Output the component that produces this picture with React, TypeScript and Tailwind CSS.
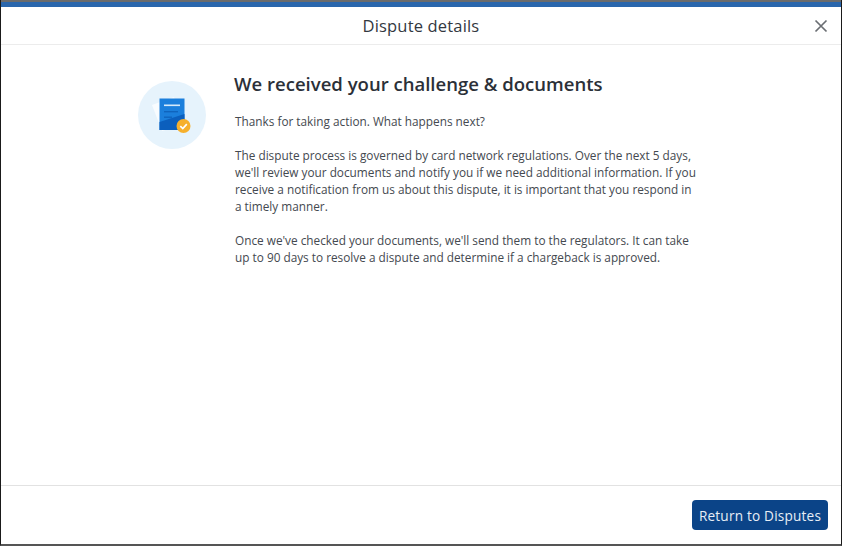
import React from "react";

function DocIcon() {
  return (
    <svg width="68" height="68" viewBox="0 0 68 68" className="block">
      <circle cx="34" cy="34" r="34" fill="#e6f3fc" />
      <path d="M14 24 L36 16 L46 44 L24 50 Z" fill="#f8fcff" />
      <rect x="21.5" y="17.5" width="25" height="31.5" fill="#1b7fdc" />
      <path d="M21.5 41 L46.5 33 L46.5 49 L21.5 49 Z" fill="#0b5fbd" />
      <rect x="26" y="23.5" width="16" height="1.6" fill="#d5eafa" />
      <rect x="26" y="30" width="14" height="1.4" fill="#0f64bd" />
      <rect x="26" y="35.5" width="8" height="1.4" fill="#0f64bd" />
      <circle cx="45.5" cy="45" r="7" fill="#f6b02c" />
      <path d="M42.3 45.1 L44.8 47.5 L48.8 43.1" fill="none" stroke="#fff" strokeWidth="1.7" />
    </svg>
  );
}

export default function App() {
  return (
    <div className="w-[842px] h-[546px] bg-white flex flex-col border-l border-r border-b-2 border-l-[#1a1a1a] border-r-[#1a1a1a] border-b-[#555555] font-['Open_Sans','Noto_Sans',sans-serif] overflow-hidden">
      <div className="h-[2px] bg-[#6b6b6b] -mx-px shrink-0" />
      <div className="h-[5px] bg-[#2a66ac] -mx-px shrink-0" />
      <header className="h-[38px] shrink-0 border-b border-[#ececec] flex items-center justify-center relative pt-[2px]">
        <h1 className="text-[16.5px] text-[#33383f] leading-none tracking-[0.17px]">Dispute details</h1>
        <svg className="absolute right-[13px] top-[12px]" width="14" height="14" viewBox="0 0 14 14">
          <path d="M1.5 1.5 L12.5 12.5 M12.5 1.5 L1.5 12.5" stroke="#6a6e73" strokeWidth="1.7" fill="none" />
        </svg>
      </header>
      <main className="flex-1 flex pl-[137px]">
        <div className="pt-[36px] shrink-0">
          <DocIcon />
        </div>
        <div className="ml-[28px] pt-[27px] w-[480px]">
          <h2 className="text-[18.55px] font-semibold text-[#2b3038] leading-[24px]">
            We received your challenge &amp; documents
          </h2>
          <div className="mt-[17px] ml-px text-[11.8px] leading-[17px] text-[#44494f] flex flex-col gap-[17px]">
            <p>Thanks for taking action. What happens next?</p>
            <p>
              The dispute process is governed by card network regulations. Over the next 5 days,
              <br />
              we'll review your documents and notify you if we need additional information. If you
              <br />
              receive a notification from us about this dispute, it is important that you respond in
              <br />a timely manner.
            </p>
            <p>
              Once we've checked your documents, we'll send them to the regulators. It can take
              <br />
              up to 90 days to resolve a dispute and determine if a chargeback is approved.
            </p>
          </div>
        </div>
      </main>
      <footer className="h-[59px] shrink-0 border-t border-[#e2e2e2] flex justify-end items-start pt-[14px] pr-[13px]">
        <button className="h-[30px] w-[136px] rounded-[4px] bg-[#0b4488] text-[#e8eef6] text-[13.6px] tracking-[0.2px] leading-none pt-px">
          Return to Disputes
        </button>
      </footer>
    </div>
  );
}
